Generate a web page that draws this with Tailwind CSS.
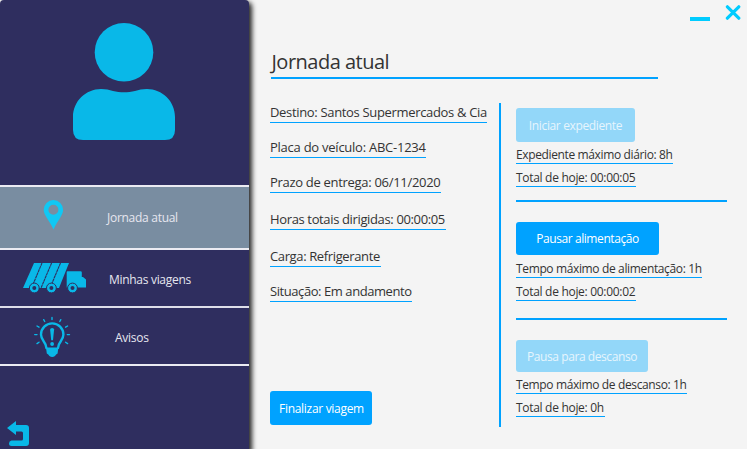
<!DOCTYPE html>
<html lang="pt-BR">
<head>
<meta charset="utf-8">
<title>Jornada atual</title>
<script src="https://cdn.jsdelivr.net/npm/@tailwindcss/browser@4"></script>
</head>
<body class="w-[747px] h-[449px] overflow-hidden bg-[#f4f4f4] font-['Open_Sans',sans-serif] text-[#333333]">
<div class="flex h-[449px]">
  <aside class="w-[249px] h-full shrink-0 bg-[#2f2e5f] rounded-t-[4px] flex flex-col text-[12px] text-[#e6e6ef] shadow-[2px_3px_5px_1px_rgba(0,0,0,0.85)]">
    <div class="h-[185px] pt-[22px] pl-[72px]">
      <svg class="w-[104px] h-[120px]" viewBox="72 22 104 120" fill="#09b8e8"><circle cx="124" cy="52.3" r="29.3"/><path d="M73 117C73 101 86 89 101 89C106 89 109 89.8 113 91C120 92.8 128 92.8 135 91C139 89.8 142 89 147 89C162 89 175 101 175 117V130Q175 140 165 140H83Q73 140 73 130Z"/></svg>
    </div>
    <nav class="border-t-2 border-[#ebebf2]">
      <a class="flex items-center h-[63px] bg-[#798da1] border-b-2 border-[#ebebf2]">
        <span class="w-[107px] pl-[43px] pb-[5px]"><svg class="w-[21px] h-[30px]" viewBox="0 0 21 30" fill="#10c8f4"><path fill-rule="evenodd" d="M10.4 0A9.7 9.7 0 0 1 20.1 9.8C20.1 15 15 20 10.5 29.4C6 20 .7 15 .7 9.8A9.7 9.7 0 0 1 10.4 0ZM10.4 4.8A5 5 0 1 0 10.4 14.8A5 5 0 1 0 10.4 4.8Z"/></svg></span>
        <span class="whitespace-nowrap tracking-[-0.28px]">Jornada atual</span>
      </a>
      <a class="flex items-center h-[58px] border-b-2 border-[#dedee9]">
        <span class="w-[109px] pl-[22px]"><svg class="w-[66px] h-[32px]" viewBox="22 262 66 32"><g fill="#09b8e8"><path d="M34 263H69L59 288H23Z"/><path d="M67.5 271.2H80.5Q81.8 271.2 81.8 272.5V277H83L86 279.5V287.5H66.7V272.2Q66.7 271.2 67.5 271.2Z"/></g><path d="M42 263L31.5 288M51.6 263L41 288M60.5 263L50 288" stroke="#2f2e5f" stroke-width="1.1" stroke-dasharray="3 .4"/><g fill="#09b8e8" stroke="#2f2e5f" stroke-width="1"><circle cx="34.3" cy="288" r="4.9"/><circle cx="51.4" cy="288" r="4.9"/><circle cx="72.5" cy="288" r="4.9"/></g><g fill="#2f2e5f"><circle cx="34.3" cy="288" r="2"/><circle cx="51.4" cy="288" r="2"/><circle cx="72.5" cy="288" r="2"/></g></svg></span>
        <span class="pt-[3px] whitespace-nowrap tracking-[-0.3px]">Minhas viagens</span>
      </a>
      <a class="flex items-center h-[58px] border-b-2 border-[#ebebf2]">
        <span class="w-[115px] pl-[33px]"><svg class="w-[38px] h-[42px]" viewBox="33 315 38 42" fill="none" stroke="#09b8e8" stroke-linecap="round"><path stroke-width="2.4" d="M46.4 348C46.4 342 41 341 41 334.6A11.2 11.2 0 0 1 63.4 334.6C63.4 341 58 342 58 348"/><path fill="#09b8e8" stroke="none" d="M46 347.5H58.3L57.6 353.5Q56 354.2 55 356Q52.2 358 49.4 356Q48.4 354.2 46.8 353.5Z"/><path stroke-width="1.4" d="M52 317.5V319.5M43.7 319.7L44.7 321.5M60.8 319.7L59.8 321.5M37 326L39 327.2M67.6 326L65.6 327.2M34.7 334.6H37M69.5 334.6H67.3M37 343.6L39 342.2M67.6 343.6L65.6 342.2"/><path fill="#09b8e8" stroke="none" d="M50.1 329.5Q50.1 328 52.1 328T54.1 329.5L53 340.3H51.2Z"/><circle cx="52.1" cy="344" r="1.9" fill="#09b8e8" stroke="none"/></svg></span>
        <span class="pt-[3px] whitespace-nowrap tracking-[-0.25px]">Avisos</span>
      </a>
    </nav>
    <button class="mt-auto ml-[6px] mb-[2px] w-[24px] h-[26px]" aria-label="Voltar"><svg class="block w-[24px] h-[26px]" viewBox="6 421 24 26" fill="#09b8e8"><path d="M7 428L16 421V425H26Q29 425 29 428V443Q29 446 26 446H11.5Q9 446 9 443.5T11.5 440.5H21.5Q23 440.5 23 439V433Q23 431.5 21.5 431.5H16V435Z"/></svg></button>
  </aside>

  <main class="flex-1 flex flex-col pl-[21px]">
    <div class="flex justify-end items-start gap-[15px] h-[48px] pt-[5px] pr-[6px]">
      <span class="w-5 h-1 mt-3 bg-[#00ccff]"></span>
      <svg class="w-[16px] h-[15px]" viewBox="0 0 16 15" stroke="#00ccff" stroke-width="3.2" stroke-linecap="round"><path d="M2.4 1.8L13.8 13.2M13.8 1.8L2.4 13.2"/></svg>
    </div>
    <h1 class="ml-px w-[387px] h-[31px] border-b-2 border-[#00a2ff] text-[20px] leading-[28px] whitespace-nowrap tracking-[-0.5px] indent-[0.5px]">Jornada atual</h1>
    <div class="flex mt-6">
      <section class="w-[229px] h-[324px] flex flex-col items-start text-[13px] leading-[19px] whitespace-nowrap">
        <p class="w-[217px] h-5 border-b border-[#00a2ff] tracking-[-0.33px]">Destino: Santos Supermercados &amp; Cia</p>
        <p class="mt-[15px] w-[156px] h-5 border-b border-[#00a2ff] tracking-[-0.25px]">Placa do veículo: ABC-1234</p>
        <p class="mt-[15px] w-[171px] h-5 border-b border-[#00a2ff] tracking-[-0.3px]">Prazo de entrega: 06/11/2020</p>
        <p class="mt-[17px] w-[176px] h-5 border-b border-[#00a2ff] tracking-[-0.36px]">Horas totais dirigidas: 00:00:05</p>
        <p class="mt-[17px] w-[111px] h-5 border-b border-[#00a2ff] tracking-[-0.37px]">Carga: Refrigerante</p>
        <p class="mt-[15px] w-[142px] h-5 border-b border-[#00a2ff] tracking-[-0.43px]">Situação: Em andamento</p>
        <button class="mt-auto mb-[2px] w-[102px] h-[34px] rounded-[3px] bg-[#00a2ff] text-white text-[12px] tracking-[-0.3px] pl-px">Finalizar viagem</button>
      </section>
      <section class="h-[324px] border-l-2 border-[#00a2ff] pl-[15px] flex flex-col items-start text-[12px] leading-[17px] whitespace-nowrap">
        <button class="mt-[5px] w-[119px] h-[34px] rounded-[3px] bg-[#93d7f9] text-[#e6f5fd] tracking-[-0.36px]">Iniciar expediente</button>
        <p class="mt-[4px] w-[157px] h-[18px] border-b border-[#00a2ff] tracking-[-0.37px]">Expediente máximo diário: 8h</p>
        <p class="mt-[5px] w-[120px] h-[18px] border-b border-[#00a2ff] tracking-[-0.3px]">Total de hoje: 00:00:05</p>
        <div class="mt-[13px] w-[211px] h-[2px] bg-[#00a2ff]"></div>
        <button class="mt-[20px] w-[143px] h-[33px] rounded-[3px] bg-[#00a2ff] text-white tracking-[-0.42px]">Pausar alimentação</button>
        <p class="mt-[5px] w-[186px] h-[18px] border-b border-[#00a2ff] tracking-[-0.36px]">Tempo máximo de alimentação: 1h</p>
        <p class="mt-[5px] w-[120px] h-[18px] border-b border-[#00a2ff] tracking-[-0.3px]">Total de hoje: 00:00:02</p>
        <div class="mt-[17px] w-[211px] h-[2px] bg-[#00a2ff]"></div>
        <button class="mt-[20px] w-[132px] h-[32px] rounded-[3px] bg-[#93d7f9] text-[#e6f5fd] tracking-[-0.42px]">Pausa para descanso</button>
        <p class="mt-[4px] w-[171px] h-[18px] border-b border-[#00a2ff] tracking-[-0.37px]">Tempo máximo de descanso: 1h</p>
        <p class="mt-[5px] w-[89px] h-[18px] border-b border-[#00a2ff] tracking-[-0.3px]">Total de hoje: 0h</p>
      </section>
    </div>
  </main>
</div>
</body>
</html>
